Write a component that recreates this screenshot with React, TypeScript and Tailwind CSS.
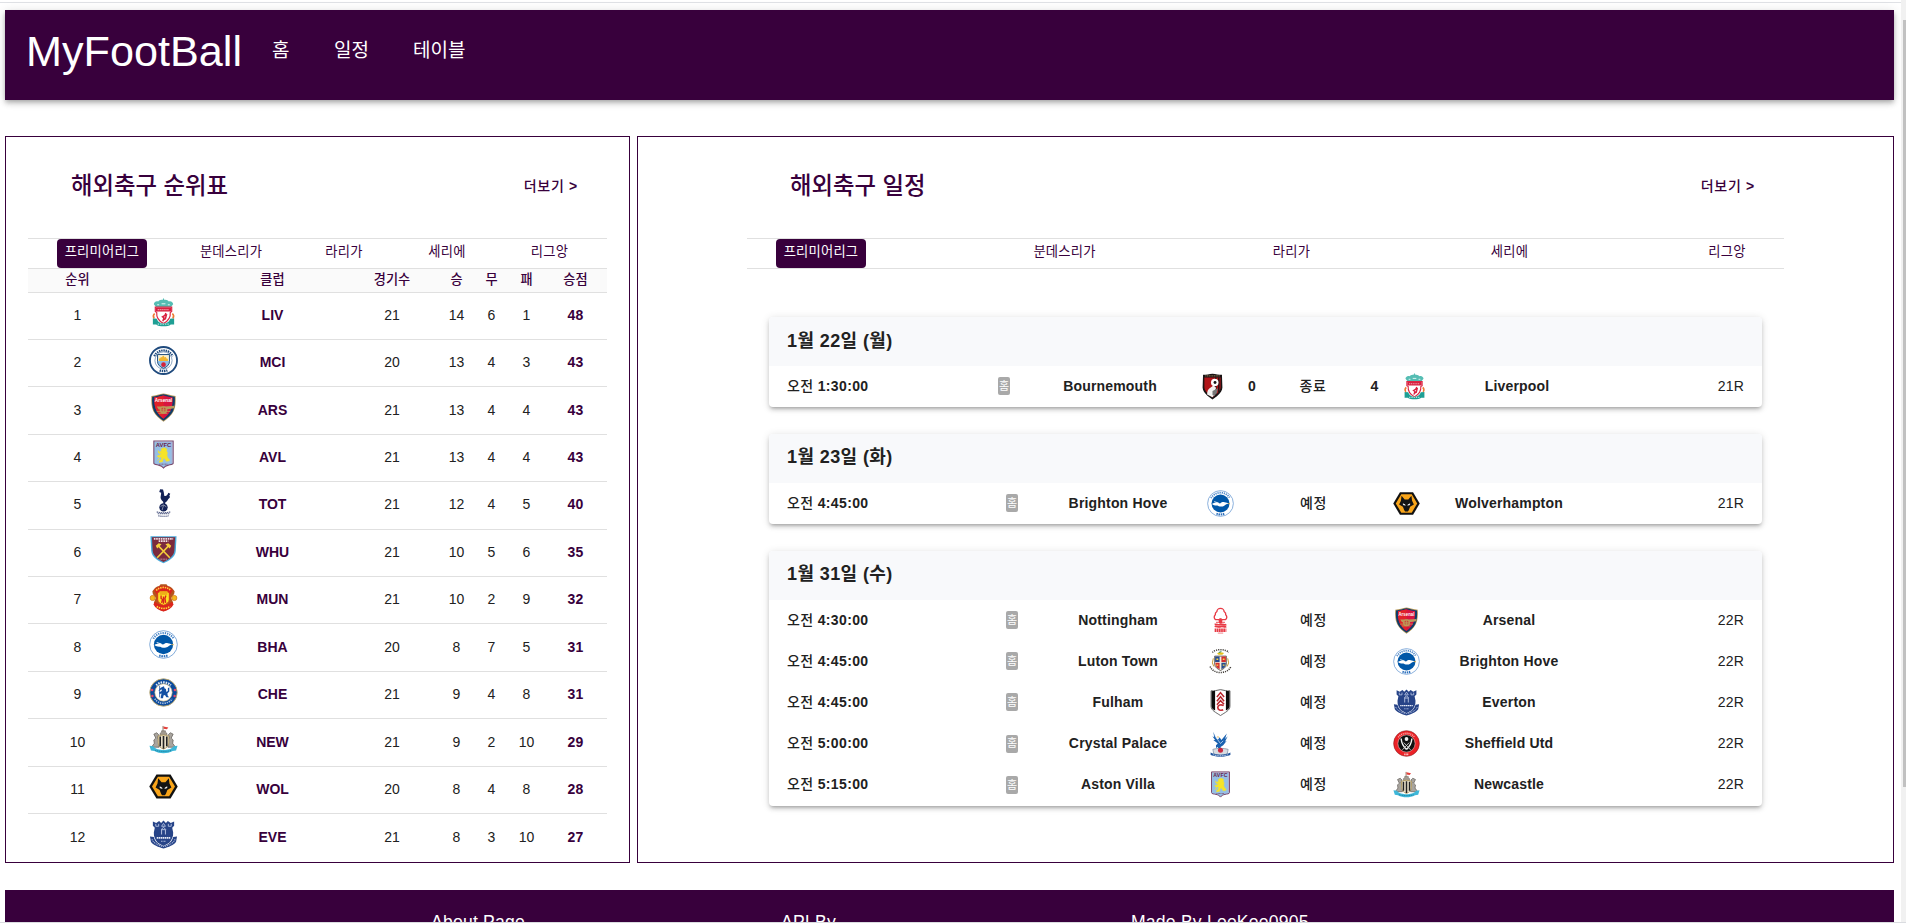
import React from "react";

type ClubCode =
  | "LIV" | "MCI" | "ARS" | "AVL" | "TOT" | "WHU" | "MUN" | "BHA" | "CHE"
  | "NEW" | "WOL" | "EVE" | "BOU" | "NFO" | "LUT" | "FUL" | "CRY" | "SHU";

const crests: Record<ClubCode, React.ReactNode> = {
  LIV: (
    <g>
      <path d="M15 0.5v4M12 3.5c1-1.5 5-1.5 6 0" stroke="#4fbdb2" strokeWidth="1" fill="none" />
      <path d="M5 6.5c0-2 2-3.8 4.500-3 1-1.400 3-1.600 5.500-1.600s4.500.2 5.500 1.600c2.500-.8 4.500 1 4.500 3l-2.500 3h-15z" fill="#55bdb3" />
      <path d="M8.5 7h2M13 6h4M19.500 7h2" stroke="#e8f8f5" strokeWidth="1" />
      <path d="M6.500 9.500h17v4.500l-1.500 1c.5 5-2.500 9-7 11.500-4.500-2.500-7.500-6.500-7-11.500l-1.500-1z" fill="#fff" stroke="#dc2845" strokeWidth="1.200" />
      <path d="M7 10h16v4H7z" fill="#d9203f" />
      <path d="M9 12h12" stroke="#f4a9b5" strokeWidth="1.200" strokeDasharray="1.200 .8" />
      <path d="M17.500 15.500l-1 2.500-2.500 1.500 1.500 1-1.200 3.500M16 18l2-.5-1 4-2 1" stroke="#d9203f" strokeWidth="1.500" fill="none" />
      <path d="M4 21l4 .5c1.500 4 4.500 5 7 5s5.500-1 7-5l4-.5v6.500h-3.500c-1.500 1.500-4.500 1.800-7.500 1.800s-6-.3-7.500-1.800H4z" fill="#1f9f94" />
      <path d="M9 27h12" stroke="#dff5f2" strokeWidth="1" strokeDasharray="1.500 1" />
      <path d="M5.800 16c-2 2-1.500 3.500-.5 5M24.200 16c2 2 1.500 3.500.5 5" stroke="#ee7a31" strokeWidth="1.700" fill="none" />
    </g>
  ),
  MCI: (
    <g>
      <circle cx="15" cy="15" r="14" fill="#fff" stroke="#1f4a7d" strokeWidth="1.900" />
      <path d="M5.500 10.500A10.600 10.600 0 0 1 24.500 10.500" fill="none" stroke="#1f4a7d" strokeWidth="2.300" strokeDasharray="1.500 .8" />
      <path d="M11 25.200A10.600 10.600 0 0 0 19 25.200" fill="none" stroke="#1f4a7d" strokeWidth="2.300" strokeDasharray="1.500 .8" />
      <circle cx="15" cy="15" r="8.900" fill="#fff" stroke="#5b7fa8" strokeWidth=".7" />
      <path d="M8.800 8.800h12.400v7.200c0 3.500-2.700 5.700-6.200 7.200-3.500-1.500-6.200-3.700-6.200-7.200z" fill="#8fc0e8" stroke="#27527f" strokeWidth="1" />
      <path d="M9.500 9.500h11v6h-11z" fill="#fdf0c8" />
      <path d="M10.500 15.500c-.5-3 .5-3 1-2.500.5-2 1.500-2 2-1 .5-2.500 2-2.500 2.500 0 .5-1 2-1 2 1 1-.5 2 0 1.500 2.500z" fill="#f1b52e" />
      <circle cx="15" cy="19.300" r="2.400" fill="#d3233b" />
    </g>
  ),
  ARS: (
    <g>
      <path d="M2.500 3c4.500-.5 8.500-1.800 12.500-2.500 4 .7 8.500 2 12.500 2.500.3 5 .3 11-2 16-2 4.500-6.500 8-10.500 10.700C11 27 6.500 23.500 4.500 19 2.200 14 2.200 8 2.500 3z" fill="#b89a5b" />
      <path d="M3.300 3.800C8 3.500 11 2 15 1.300c4 .7 7 2.200 11.700 2.500.3 5 .1 10.500-1.900 15-2 4.200-6 7.300-9.800 9.800-3.800-2.500-7.800-5.600-9.800-9.800-2-4.500-2.200-10-1.900-15z" fill="#0f3b6a" />
      <path d="M5.600 4.500c4.400-.5 6.400-1.500 9.400-2 3 .5 5 1.500 9.400 2 .2 4.500 0 9-1.800 13.200-1.700 3.800-4.700 6.700-7.600 8.900-2.900-2.200-5.900-5.100-7.600-8.900-1.800-4.200-2-8.700-1.800-13.200z" fill="#d81440" />
      <path d="M5.600 4.500c4.400-.5 6.400-1.500 9.400-2v24.100c-2.900-2.200-5.900-5.100-7.600-8.900-1.800-4.200-2-8.700-1.800-13.200z" fill="#e1222a" />
      <text x="15" y="9.600" textAnchor="middle" textLength="18" lengthAdjust="spacingAndGlyphs" fontSize="6" fontWeight="700" fill="#fff">Arsenal</text>
      <path d="M8 14h9l9-.7v2.500l-8 1.200h-8z" fill="#b99a5c" />
      <circle cx="15" cy="17.500" r="3.200" fill="#c9473d" stroke="#bd9b58" strokeWidth="1.400" />
      <path d="M8 19h14M10 21h9M12 17.500h6M15 14.500v6" stroke="#bd9b58" strokeWidth=".9" />
    </g>
  ),
  AVL: (
    <g>
      <path d="M5 1h20v23c0 1.500-3 1.500-5 2-2.500.5-4 1.500-5 3-1-1.500-2.500-2.500-5-3-2-.5-5-.5-5-2z" fill="#95bfe5" stroke="#7b4a6d" strokeWidth="1.100" />
      <path d="M6 1.800h18v22" stroke="#c9a0b8" strokeWidth=".6" fill="none" />
      <text x="15" y="7" textAnchor="middle" textLength="16" lengthAdjust="spacingAndGlyphs" fontSize="5.800" fontWeight="700" fill="#6b2149">AVFC</text>
      <path d="M13 9l3-1 2.500 1.500-.5 2 1 1.500-.5 3 1 3 1.500 1v1.500l-3 .5-2-3-1.500.5-.5 3-3.500.5.500-1.500 1.500-1 .5-3-3 .5-1.500-1.500 3-1 1.500-2-2 .5-.5-1.500 2-.5z" fill="#f6e427" stroke="#f6e427" strokeWidth=".6" />
      <path d="M9.500 11l1 3M9 21l2-2" stroke="#f6e427" strokeWidth="1" />
      <path d="M10.500 25h9" stroke="#7b4a6d" strokeWidth=".9" strokeDasharray="1 .5" />
    </g>
  ),
  TOT: (
    <g fill="#132257">
      <path d="M11.500 1.200l3 .3.800 3 .5 3.500c1.800.8 3.500-.5 4.200-3l2 1-1 2c1.500 1.200.2 2.500-1 3.500-1 1.800-2 3-3.200 3.500l-.3 2h1.200v.8h-3.400v-.8h.8l-.5-2.700c-2.300-2-3.200-4-2.300-6.800l.3-2.500-2-.8z" />
      <circle cx="15" cy="20" r="4.300" />
      <path d="M12 19l3-1.500 3 2M13.500 23l1.500-5" stroke="#fff" strokeWidth=".5" fill="none" />
      <path d="M8 24.700c4 1.200 10 1.200 14 0M9 26.700h12M9.500 28.700c4 .8 7 .8 11 0" stroke="#525c85" strokeWidth="1.100" strokeDasharray="1.500 .6" fill="none" />
    </g>
  ),
  WHU: (
    <g>
      <path d="M1.500 1.200h27l-.8 15.300c-.5 6.500-7 10-12.700 12.800C9.300 26.500 2.800 23 2.300 16.500z" fill="#4aa9d9" />
      <path d="M3 2.200h24l-.8 14c-.5 5.800-6 9-11.200 11.700C9.800 25.200 4.300 22 3.800 16.200z" fill="#7b2a3d" />
      <path d="M5 4h20M10 6.300h10" stroke="#f0dfe3" strokeWidth="1.700" strokeDasharray="1.700 .7" />
      <path d="M9 10.500l12.500 13M21 10.500l-12.500 13" stroke="#f4cf3b" strokeWidth="1.600" />
      <path d="M7 11l3-2.500 3 1-4.500 4.500zM23 11l-3-2.500-3 1 4.500 4.500z" fill="#f4cf3b" />
      <path d="M11 25h8" stroke="#d9bcc4" strokeWidth=".9" strokeDasharray="1 .6" />
    </g>
  ),
  MUN: (
    <g>
      <path d="M6 5.500c1-1.500 3-2.200 4.500-2.500L12 1.200h6L19.500 3c1.500.3 3.500 1 4.500 2.500l2.500 3-.5 3-3 4 2 5c-1.500 4.500-5.500 7.500-10 8.800-4.500-1.300-8.500-4.300-10-8.800l2-5-3-4-.5-3z" fill="#b5531c" />
      <path d="M5.500 7.500c4.500-6 14.500-6 19 0l-2.500 4.500c-4-4-10-4-14 0z" fill="#dc241c" />
      <path d="M6.500 19.500c4.500 4.500 12.500 4.500 17 0l2 2.500c-2 4-6 6.500-10.500 7.500-4.500-1-8.500-3.500-10.500-7.500z" fill="#dc241c" />
      <path d="M7.500 7.700c4-4.200 11-4.200 15 0M8 24.300c4 2.700 10 2.700 14 0" stroke="#ffd83b" strokeWidth="1.700" strokeDasharray="1.500 .9" fill="none" />
      <path d="M9 10c3-2 9-2 12 0v7c0 3-3 5-6 6-3-1-6-3-6-6z" fill="#fbe122" stroke="#d9231c" strokeWidth=".8" />
      <path d="M11 8.500h8v3.800h-8z" fill="#efae18" />
      <path d="M12.500 13v3l1.500 1-1 3.500M17.500 13l-1 3 .7 4.500M15 14v7.500" stroke="#d9231c" strokeWidth="1.400" fill="none" />
      <circle cx="3.800" cy="15.500" r="2.700" fill="#f4b81d" stroke="#c8641b" strokeWidth=".6" />
      <circle cx="26.200" cy="15.500" r="2.700" fill="#f4b81d" stroke="#c8641b" strokeWidth=".6" />
    </g>
  ),
  BHA: (
    <g>
      <circle cx="15" cy="15" r="14.300" fill="#fff" stroke="#5d93cf" strokeWidth=".8" />
      <path d="M4.500 9A12.200 12.200 0 0 1 25.500 9" fill="none" stroke="#4b86c8" strokeWidth="2" strokeDasharray="1.300 1" />
      <path d="M10.500 26.300A12.200 12.200 0 0 0 19.500 26.300" fill="none" stroke="#2d70bd" strokeWidth="2.200" strokeDasharray="1.600 .8" />
      <circle cx="15" cy="15" r="10" fill="#0057a8" />
      <path d="M5.500 15.500c4-2 7-1 9-.5 2-1.500 3.500-2 5-1.300 2 .3 3 .8 4.500 1.300-3 .5-4 2.500-6.500 3.200-3 .6-5-.4-6-1-2 .3-4-.2-6-1.700z" fill="#fff" />
      <path d="M8 13l5 1.500" stroke="#fff" strokeWidth="1" />
      <path d="M23.500 15.200h2" stroke="#e5b13a" strokeWidth="1" />
    </g>
  ),
  CHE: (
    <g>
      <circle cx="15" cy="15" r="14.200" fill="#0b4a9c" stroke="#c9ae6b" strokeWidth=".9" />
      <path d="M7.500 7.500A10.900 10.900 0 0 1 22.500 7.500" fill="none" stroke="#dfe9f5" strokeWidth="2.300" strokeDasharray="1.600 1" />
      <path d="M6 21.500A10.900 10.900 0 0 0 24 21.500" fill="none" stroke="#aec7e6" strokeWidth="1.600" strokeDasharray="1.300 1" />
      <circle cx="15" cy="15" r="9" fill="#fff" stroke="#c9ae6b" strokeWidth=".6" />
      <path d="M13 9.500l2.500-1 .5 2 1.500 1 .5 3 1.500-1v-3l1.500-1v4.500l-2 2 .5 2.500 1.500 1.500h-3l-1.500-2.500-1.500.5-.5 3h-2.500l.5-3 .5-2-2 .5-.5-1.500 2.500-1.500.5-1.500-2.500.5v-1.500z" fill="#1350a3" />
      <path d="M11 8v12M12 12l-2 1" stroke="#1350a3" strokeWidth=".8" />
      <circle cx="3.200" cy="12.500" r="1.300" fill="#e5496b" />
      <circle cx="26.800" cy="12.500" r="1.300" fill="#e5496b" />
      <circle cx="3.500" cy="18.500" r="1.300" fill="#e5496b" />
      <circle cx="26.500" cy="18.500" r="1.300" fill="#e5496b" />
    </g>
  ),
  NEW: (
    <g>
      <path d="M14.500 1v7" stroke="#8a7a67" strokeWidth="1" />
      <path d="M15 1.500l5 1-1.500 2-3.500-.5z" fill="#e3403b" />
      <path d="M11.500 11V8.500l1.500-1V6h4v1.500l1.500 1V11z" fill="#a39b90" stroke="#5c564d" strokeWidth=".5" />
      <path d="M5 9.500l3-1.500 2 2-1 3 1.500 3v7H2.500l3-4-.5-3.500 2-2zM25 9.500L22 8l-2 2 1 3-1.500 3v7h8l-3-4 .5-3.500-2-2z" fill="#a8a49e" stroke="#59554f" strokeWidth=".7" />
      <path d="M9.500 11.500c3.500-1.500 7.500-1.500 11 0v7c0 3.500-3 5.500-5.500 6.500-2.500-1-5.500-3-5.500-6.500z" fill="#efe6cf" stroke="#ac9250" strokeWidth=".8" />
      <path d="M11.600 12v10M15 11.500v13M18.400 12v10" stroke="#222" strokeWidth="1.700" />
      <path d="M.5 21.500l4 .5c2 3 6.500 3.800 10.500 3.800s8.500-.8 10.500-3.800l4-.5-1.500 5-3.500.5c-3 1.700-6 2.200-9.500 2.200s-6.500-.5-9.500-2.200l-3.500-.5z" fill="#3eb7d8" />
      <path d="M6.500 26.300c5 1.400 12 1.400 17 0" stroke="#167b9b" strokeWidth=".9" strokeDasharray="1.200 .7" fill="none" />
    </g>
  ),
  WOL: (
    <g>
      <path d="M7.700 2.500h14.600L29.700 15l-7.400 12.500H7.700L.3 15z" fill="#111" />
      <path d="M9.200 4.800h11.600L26.900 15l-6.100 10.200H9.200L3.100 15z" fill="#f9a51a" />
      <path d="M9.500 6.500l3.500 4h4l3.500-4 .7 5.500 2 4-4.200 2.500-1.500 4-1 1.500h-3l-1-1.500-1.500-4-4.200-2.500 2-4z" fill="#141414" />
      <path d="M11.300 15.300l2.400 1.500-2-.2zM18.700 15.300l-2.400 1.500 2-.2z" fill="#fff" stroke="#fff" strokeWidth=".7" />
    </g>
  ),
  EVE: (
    <g>
      <path d="M4 1.500l3.500 1.500 3-2 2 2L15 .5l2.500 2.500 2-2 3 2L26 1.500v4.500l-2 2 1 5c.3 4-1.500 8-4 10.500L15 27l-6-3.500C6.500 21 4.700 17 5 13l1-5-2-2z" fill="#274488" />
      <path d="M1 17l4 .5c1 5 5 8 10 9.500 5-1.500 9-4.500 10-9.500l4-.5-1 5.500C26 26 20 28 15 29.500 10 28 4 26 2 22.500z" fill="#274488" />
      <path d="M3 20c2 4.500 7 6.500 12 7.300 5-.8 10-2.800 12-7.300" stroke="#a9b8dc" strokeWidth="1.100" strokeDasharray="1.200 .8" fill="none" />
      <path d="M7 4v2.500h3V4M13 6.500L15 3.500l2 3zM20 4v2.500h3V4" stroke="#b8c5e4" strokeWidth=".9" fill="none" />
      <path d="M13 15V10h4v5M12.500 10l2.500-2.500 2.500 2.500" stroke="#c8d2ea" strokeWidth=".9" fill="none" />
      <path d="M8 18.500h14" stroke="#e8edf8" strokeWidth="1.600" strokeDasharray="1.600 .5" />
      <path d="M12.500 22h5" stroke="#b8c5e4" strokeWidth="1" strokeDasharray="1 .5" />
    </g>
  ),
  BOU: (
    <g>
      <path d="M4.500 2c3.500 0 7-.8 10.500-1.200 3.500.4 7 1.200 10.500 1.200l.5 14c-.5 6-6 9.500-11 13.500C10 25.500 4.500 22 4 16z" fill="#191414" />
      <path d="M6 5h18v11c-.5 4.500-4.500 7.500-9 11-4.500-3.500-8.500-6.500-9-11z" fill="#b01418" />
      <path d="M18.500 5v21M22 5v16" stroke="#191414" strokeWidth="1.500" />
      <path d="M7 3.200h16" stroke="#a38a60" strokeWidth="1" strokeDasharray="1.300 .6" />
      <path d="M9 24c0-4 1-6.500 4-8l3-2 3 2.500-1 3 1.500 2-4.500 5.500z" fill="#f3f1ef" />
      <path d="M15 20l6-3-1 5-3 3.500-2-1z" fill="#777" />
      <circle cx="17.500" cy="10.500" r="4.200" fill="#fff" />
      <circle cx="17.800" cy="10.500" r="1.600" fill="#191414" />
    </g>
  ),
  NFO: (
    <g>
      <path d="M15 1.500c-2.500 0-4 2-4 3.500-1.500 1-2 2.500-1.800 3.500C7.500 10 7.600 13 9.500 14h4l.5 3h2l.5-3h4c1.900-1 2-4 .3-5.500.2-1-.3-2.500-1.800-3.500 0-1.500-1.500-3.500-4-3.500z" fill="#fff" stroke="#e83a45" strokeWidth="1.500" />
      <path d="M14 13h2v5h-2zM10 17h10" fill="#e83a45" stroke="#e83a45" strokeWidth="1" />
      <path d="M8.500 19.500c2-1.200 4 1.200 6.500 0s4.500 1.200 6.500 0M8.500 21.800c2-1.200 4 1.200 6.500 0s4.500 1.200 6.500 0" stroke="#e83a45" strokeWidth="1.900" fill="none" />
      <path d="M8.500 25.800h13" stroke="#e83a45" strokeWidth="3.800" strokeDasharray="1.900 .5" />
      <path d="M12 29h6" stroke="#ef7b82" strokeWidth="1" />
    </g>
  ),
  LUT: (
    <g>
      <path d="M6 5C9 .8 21 .8 24 5M3.500 20.500c3 9 20 9 23 0" stroke="#44403c" strokeWidth="1.700" strokeDasharray="1.300 1.100" fill="none" />
      <path d="M11 6.500c2-2.500 5-2.200 8-1l-2 2h-4z" fill="#e5c21b" />
      <path d="M13 5l3-1" stroke="#16834b" strokeWidth="1" />
      <path d="M8.500 9h13v9c0 3.500-3.500 5.500-6.500 7-3-1.500-6.500-3.500-6.500-7z" fill="#f3efe1" stroke="#3a372d" strokeWidth=".8" />
      <path d="M9 9.500h5v6H9zM16 16.500h5c0 4-2 6-5 7z" fill="#264b8c" />
      <path d="M16 9.500h5v6h-5zM9.300 16.500H14v7c-3-1-4.700-3-4.700-7z" fill="#d32f2f" />
      <path d="M10.500 12.500h2M17.500 12.500h2M10.500 19h2M17.500 19h2" stroke="#ffd84a" strokeWidth="1.600" />
      <path d="M7 11.500l-1 5 1.500 4M23 11.500l1 5-1.500 4" stroke="#c69b31" strokeWidth="1.100" fill="none" />
    </g>
  ),
  FUL: (
    <g>
      <path d="M4.500 2c3.500.5 6.500-.6 10.500-1.300C19 1.400 22 2.500 25.500 2v17c0 5-5.500 7-10.500 10.500C10 26 4.500 24 4.500 19z" fill="#fff" stroke="#444" strokeWidth=".9" />
      <path d="M5 2.500L9 2v22c-3-1.500-4-3-4-5zM25 2.500L21 2v22c3-1.500 4-3 4-5z" fill="#0c0c0c" />
      <path d="M11 9l4-5 4 5M11 13.500l4-5 4 5M11 17.500l4-4.500 4 4" stroke="#b5262d" strokeWidth="1.700" fill="none" />
      <path d="M18.500 18.500c-3-2-6.500-.5-6.500 2s3 4 6 2.500" stroke="#c6333a" strokeWidth="1.900" fill="none" />
    </g>
  ),
  CRY: (
    <g>
      <path d="M7 2l2 5 3 4 2-3 2 3 6-7-2 6 3-3-3 6 2-1-4 5-3 2 1 3h-3l-1-3-2 1v-3l2-2-5-4 2 0-3-4 2 1z" fill="#1b62b0" />
      <path d="M12 11l3 4 3-3M9 6l2 4" stroke="#dbe8f6" strokeWidth=".8" fill="none" />
      <path d="M13 8l-1.500-.5" stroke="#e2a82e" strokeWidth="1.200" />
      <path d="M6.500 21.500c5-1.500 12-1.500 17 0l-1 5c-4 2-11 2-15 0z" fill="#d7dce2" stroke="#7e8ea3" strokeWidth=".8" />
      <circle cx="15" cy="22.500" r="2.800" fill="#c8283f" />
      <path d="M4 25c6 3.200 16 3.200 22 0v2.800C19 30.500 11 30.500 4 27.800z" fill="#2457a0" />
      <path d="M7 27.500c5 1.600 11 1.600 16 0" stroke="#e1e9f4" strokeWidth="1" strokeDasharray="1.200 .7" fill="none" />
    </g>
  ),
  SHU: (
    <g>
      <circle cx="15" cy="15" r="14.300" fill="#ec2227" stroke="#7e1517" strokeWidth=".6" />
      <path d="M5.800 8A11.800 11.800 0 0 1 24.200 8" stroke="#f8aaa9" strokeWidth="1.600" strokeDasharray="1.200 .9" fill="none" />
      <path d="M12.500 27h5" stroke="#fbd3d2" strokeWidth="2" strokeDasharray="1.100 .5" />
      <circle cx="15" cy="15" r="9.600" fill="#101010" stroke="#f3d4d2" strokeWidth=".6" />
      <path d="M9 9.500c.5 5.500 3 9.500 6 12M21 9.500c-.5 5.500-3 9.500-6 12" stroke="#f1f1f1" strokeWidth="1.600" fill="none" />
      <circle cx="15" cy="10" r="2.100" fill="#f1f1f1" />
      <path d="M10.500 22l7.500-8M19.500 22l-7.500-8" stroke="#d0d0d0" strokeWidth="1" />
    </g>
  ),
};

function Crest({ code, small }: { code: ClubCode; small?: boolean }) {
  return (
    <svg viewBox="0 0 30 30" className={small ? "block size-[27px]" : "mb-[5px] block size-[29px]"} aria-hidden="true">
      {crests[code]}
    </svg>
  );
}

const standings: [ClubCode, number, number, number, number, number][] = [
  ["LIV", 21, 14, 6, 1, 48],
  ["MCI", 20, 13, 4, 3, 43],
  ["ARS", 21, 13, 4, 4, 43],
  ["AVL", 21, 13, 4, 4, 43],
  ["TOT", 21, 12, 4, 5, 40],
  ["WHU", 21, 10, 5, 6, 35],
  ["MUN", 21, 10, 2, 9, 32],
  ["BHA", 20, 8, 7, 5, 31],
  ["CHE", 21, 9, 4, 8, 31],
  ["NEW", 21, 9, 2, 10, 29],
  ["WOL", 20, 8, 4, 8, 28],
  ["EVE", 21, 8, 3, 10, 27],
];

type Match = {
  time: string;
  home: string;
  homeCode: ClubCode;
  away: string;
  awayCode: ClubCode;
  round: string;
  score?: [number, number];
};

const days: { date: string; matches: Match[] }[] = [
  {
    date: "1월 22일 (월)",
    matches: [
      { time: "1:30:00", home: "Bournemouth", homeCode: "BOU", away: "Liverpool", awayCode: "LIV", round: "21R", score: [0, 4] },
    ],
  },
  {
    date: "1월 23일 (화)",
    matches: [
      { time: "4:45:00", home: "Brighton Hove", homeCode: "BHA", away: "Wolverhampton", awayCode: "WOL", round: "21R" },
    ],
  },
  {
    date: "1월 31일 (수)",
    matches: [
      { time: "4:30:00", home: "Nottingham", homeCode: "NFO", away: "Arsenal", awayCode: "ARS", round: "22R" },
      { time: "4:45:00", home: "Luton Town", homeCode: "LUT", away: "Brighton Hove", awayCode: "BHA", round: "22R" },
      { time: "4:45:00", home: "Fulham", homeCode: "FUL", away: "Everton", awayCode: "EVE", round: "22R" },
      { time: "5:00:00", home: "Crystal Palace", homeCode: "CRY", away: "Sheffield Utd", awayCode: "SHU", round: "22R" },
      { time: "5:15:00", home: "Aston Villa", homeCode: "AVL", away: "Newcastle", awayCode: "NEW", round: "22R" },
    ],
  },
];

const leagues = ["프리미어리그", "분데스리가", "라리가", "세리에", "리그앙"];

function LeagueTabs({ columns }: { columns: string }) {
  return (
    <div className={`grid h-[31px] border-y border-[#e0e0e0] text-[13.300px] tracking-[0.2px] text-[#38003c] ${columns}`}>
      {leagues.map((name, i) => (
        <div key={name} className="flex justify-center">
          <button
            className={
              i === 0
                ? "flex h-[29px] w-[90px] items-center justify-center rounded bg-[#38003c] pb-[4px] whitespace-nowrap text-white"
                : "flex h-[29px] items-center justify-center pb-[3px] whitespace-nowrap"
            }
          >
            {name}
          </button>
        </div>
      ))}
    </div>
  );
}

function MoreLink() {
  return (
    <a className="text-[14px] font-medium tracking-[0.7px]">
      더보기 <span className="font-bold">&gt;</span>
    </a>
  );
}

const tableColumns = "grid grid-cols-[99px_73px_145px_94px_35px_35px_35px_63px] items-center justify-items-center";

function Standings() {
  return (
    <section className="w-[625px] shrink-0 border border-[#38003c] px-[22px]">
      <div className="flex h-[101px] items-center justify-between pr-[29px] pb-[2px] pl-[43px] text-[#38003c]">
        <h2 className="text-[23.400px] font-medium">해외축구 순위표</h2>
        <MoreLink />
      </div>
      <LeagueTabs columns="grid-cols-[148px_110px_116px_90px_115px]" />
      <div className={`${tableColumns} h-[23.500px] border-b border-[#e0e0e0] bg-[#fafafa] pb-[1px] text-[13.200px] font-medium text-[#38003c]`}>
        <span>순위</span>
        <span />
        <span>클럽</span>
        <span>경기수</span>
        <span>승</span>
        <span>무</span>
        <span>패</span>
        <span>승점</span>
      </div>
      {standings.map(([code, played, won, drawn, lost, points], i) => (
        <div
          key={code}
          className={`${tableColumns} h-[47.430px] border-b border-[#e0e0e0] pb-px text-[14px] text-[#212121] last:border-b-0`}
        >
          <span>{i + 1}</span>
          <Crest code={code} />
          <span className="font-bold text-[#38003c]">{code}</span>
          <span>{played}</span>
          <span>{won}</span>
          <span>{drawn}</span>
          <span>{lost}</span>
          <span className="font-bold tracking-[0.3px] text-[#38003c]">{points}</span>
        </div>
      ))}
    </section>
  );
}

function MatchRow({ match }: { match: Match }) {
  const columns = match.score
    ? "grid-cols-[218px_34px_178px_27px_52px_70px_53px_27px_178px_156px]"
    : "grid-cols-[226px_34px_178px_27px_159px_27px_178px_164px]";
  return (
    <div className={`grid h-[41.200px] items-center justify-items-center pb-px text-[14px] font-bold tracking-[0.18px] text-[#212121] ${columns}`}>
      <span className="justify-self-start pl-[18px] tracking-[0.35px]">
        <span className="font-medium">오전</span> {match.time}
      </span>
      <span className="flex h-[18px] w-3 items-center justify-center rounded-xs bg-[#a9a9a9] text-[11px] font-normal tracking-normal text-white">홈</span>
      <span>{match.home}</span>
      <Crest code={match.homeCode} small />
      {match.score && <span>{match.score[0]}</span>}
      <span className="font-medium tracking-[0.6px]">{match.score ? "종료" : "예정"}</span>
      {match.score && <span>{match.score[1]}</span>}
      <Crest code={match.awayCode} small />
      <span>{match.away}</span>
      <span className="justify-self-end pr-[18px] font-normal">{match.round}</span>
    </div>
  );
}

function Schedule() {
  return (
    <section className="flex-1 border border-[#38003c]">
      <div className="flex h-[101px] items-center justify-between pr-[138px] pb-[2px] pl-[152px] text-[#38003c]">
        <h2 className="text-[23.400px] font-medium">해외축구 일정</h2>
        <MoreLink />
      </div>
      <div className="ml-[109px] w-[1037px]">
        <LeagueTabs columns="grid-cols-[148px_339px_115px_321px_114px]" />
      </div>
      <div className="mt-[48px] ml-[131px] flex w-[993px] flex-col gap-[26.800px]">
        {days.map((day) => (
          <article
            key={day.date}
            className="overflow-hidden rounded bg-white shadow-[0_3px_3px_-2px_rgba(0,0,0,0.2),0_3px_4px_0_rgba(0,0,0,0.14),0_1px_8px_0_rgba(0,0,0,0.12)]"
          >
            <h3 className="flex h-[49px] items-center bg-[#f8f9fb] pb-px pl-[18px] text-[18px] font-bold tracking-[0.4px] text-[#212121]">
              {day.date}
            </h3>
            {day.matches.map((match) => (
              <MatchRow key={match.home} match={match} />
            ))}
          </article>
        ))}
      </div>
    </section>
  );
}

export default function App() {
  return (
    <div className="relative flex h-[923px] w-[1906px] overflow-hidden border-b border-[#dadce0] bg-white font-['Liberation_Sans','Noto_Sans_CJK_KR',sans-serif]">
      <div className="flex w-[1901px] shrink-0 flex-col">
        <div className="h-[3px] shrink-0 border-b border-[#dfe1e5]" />
        <header className="mt-[7px] mr-[7px] ml-[5px] flex h-[90px] shrink-0 items-center bg-[#38003c] pb-[8px] pl-[21px] text-white shadow-[0_2px_4px_-1px_rgba(0,0,0,0.2),0_4px_5px_0_rgba(0,0,0,0.14),0_1px_10px_0_rgba(0,0,0,0.12)]">
          <h1 className="w-[246px] text-[43.200px]">MyFootBall</h1>
          <nav className="flex gap-[44px] text-[19px]">
            <a className="w-[18px]">홈</a>
            <a className="w-[35px]">일정</a>
            <a>테이블</a>
          </nav>
        </header>
        <main className="mt-[36px] mr-[7px] ml-[5px] flex h-[727px] shrink-0 gap-[7px]">
          <Standings />
          <Schedule />
        </main>
        <footer className="mt-[27px] mr-[7px] ml-[5px] flex h-[120px] shrink-0 bg-[#38003c] pt-[20px] pl-[426px] text-[17.600px] leading-[24px] tracking-[0.2px] text-white">
          <div className="w-[350px]">About Page</div>
          <div className="w-[350px]">API By</div>
          <div className="w-[350px]">Made By LeeKee0905</div>
        </footer>
      </div>
      <div className="w-[5px] bg-[#f1f1f1] pt-[20px] pl-[2px]">
        <div className="h-[767px] bg-[#c1c1c1]" />
      </div>
    </div>
  );
}
